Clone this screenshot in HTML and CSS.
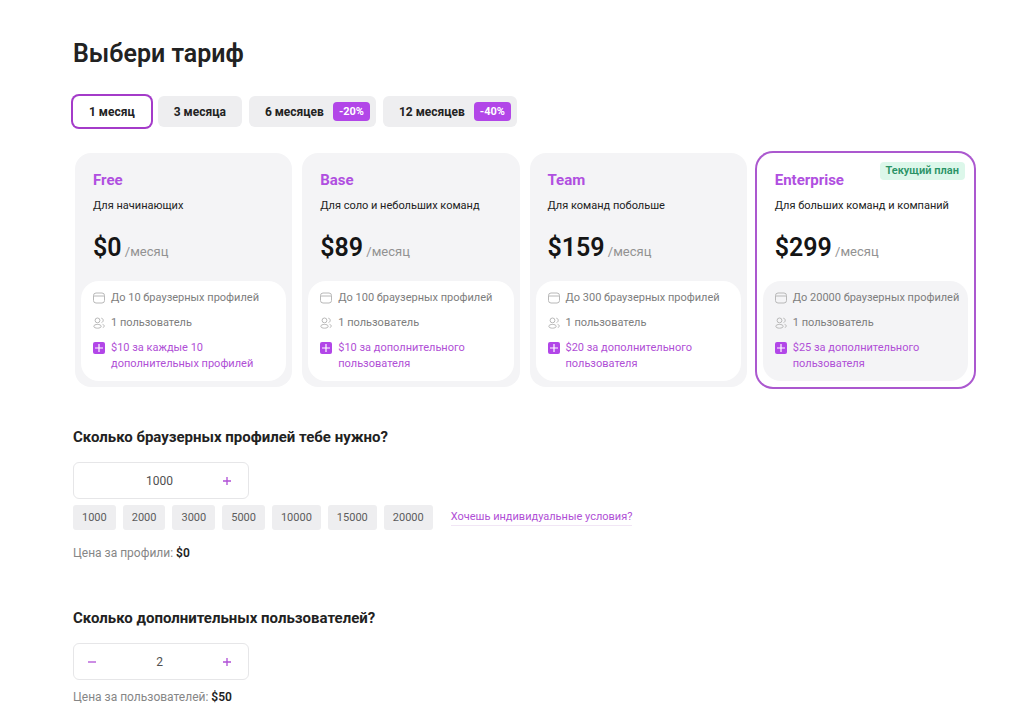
FILE: index.html
```html
<!DOCTYPE html>
<html lang="ru">

<head>
    <meta charset="utf-8">
    <meta name="viewport" content="width=device-width, initial-scale=1">
    <title>Выбери тариф</title>
    <link rel="stylesheet" href="styles.css">
</head>

<body>
    <!-- shared icons -->
    <svg class="sprite" aria-hidden="true">
        <symbol id="icon-window" viewBox="0 0 12 12">
            <rect x="0.5" y="1" width="11" height="10" rx="2.5" fill="none" stroke="currentColor" />
            <path d="M0.5 4H11.5" fill="none" stroke="currentColor" />
        </symbol>
        <symbol id="icon-users" viewBox="0 0 12 12">
            <circle cx="4.5" cy="3.4" r="2.4" fill="none" stroke="currentColor" />
            <path d="M0.8 9.3C0.8 6.8 8.2 6.8 8.2 9.3C8.2 11.8 0.8 11.8 0.8 9.3Z" fill="none" stroke="currentColor" />
            <path d="M8.3 1.2C10.8 1.4 10.8 5 8.6 5.5M9.6 7.4C11.8 8 11.8 10 9.8 10.5" fill="none" stroke="currentColor" />
        </symbol>
        <symbol id="icon-add" viewBox="0 0 12 12">
            <rect width="12" height="12" rx="2" fill="#b246e8" />
            <path d="M6 2V10M2 6H10" fill="none" stroke="#fff" stroke-width="1.2" />
        </symbol>
        <symbol id="icon-plus" viewBox="0 0 10 10">
            <path d="M5 1V9M1 5H9" fill="none" stroke="currentColor" stroke-width="1.3" />
        </symbol>
        <symbol id="icon-minus" viewBox="0 0 10 10">
            <path d="M1 5H9" fill="none" stroke="currentColor" stroke-width="1.3" />
        </symbol>
    </svg>

    <main class="page">
        <h1 class="title">Выбери тариф</h1>

        <div class="periods">
            <button class="period active" type="button">1 месяц</button>
            <button class="period" type="button">3 месяца</button>
            <button class="period with-discount" type="button">6 месяцев <span class="discount">-20%</span></button>
            <button class="period with-discount" type="button">12 месяцев <span class="discount">-40%</span></button>
        </div>

        <div class="plans">
            <section class="plan">
                <h2 class="plan-name">Free</h2>
                <p class="plan-about">Для начинающих</p>
                <p class="plan-price"><strong>$0</strong> /месяц</p>
                <ul class="features">
                    <li><svg class="icon"><use href="#icon-window" /></svg>До 10 браузерных профилей</li>
                    <li><svg class="icon"><use href="#icon-users" /></svg>1 пользователь</li>
                    <li class="extra"><svg class="icon"><use href="#icon-add" /></svg>$10 за каждые 10 дополнительных профилей</li>
                </ul>
            </section>

            <section class="plan">
                <h2 class="plan-name">Base</h2>
                <p class="plan-about">Для соло и небольших команд</p>
                <p class="plan-price"><strong>$89</strong> /месяц</p>
                <ul class="features">
                    <li><svg class="icon"><use href="#icon-window" /></svg>До 100 браузерных профилей</li>
                    <li><svg class="icon"><use href="#icon-users" /></svg>1 пользователь</li>
                    <li class="extra"><svg class="icon"><use href="#icon-add" /></svg>$10 за дополнительного пользователя</li>
                </ul>
            </section>

            <section class="plan">
                <h2 class="plan-name">Team</h2>
                <p class="plan-about">Для команд побольше</p>
                <p class="plan-price"><strong>$159</strong> /месяц</p>
                <ul class="features">
                    <li><svg class="icon"><use href="#icon-window" /></svg>До 300 браузерных профилей</li>
                    <li><svg class="icon"><use href="#icon-users" /></svg>1 пользователь</li>
                    <li class="extra"><svg class="icon"><use href="#icon-add" /></svg>$20 за дополнительного пользователя</li>
                </ul>
            </section>

            <section class="plan current">
                <span class="badge">Текущий план</span>
                <h2 class="plan-name">Enterprise</h2>
                <p class="plan-about">Для больших команд и компаний</p>
                <p class="plan-price"><strong>$299</strong> /месяц</p>
                <ul class="features">
                    <li><svg class="icon"><use href="#icon-window" /></svg>До 20000 браузерных профилей</li>
                    <li><svg class="icon"><use href="#icon-users" /></svg>1 пользователь</li>
                    <li class="extra"><svg class="icon"><use href="#icon-add" /></svg>$25 за дополнительного пользователя</li>
                </ul>
            </section>
        </div>

        <section class="amount">
            <h2 class="amount-title"><label for="profiles">Сколько браузерных профилей тебе нужно?</label></h2>
            <div class="counter">
                <span class="step"></span>
                <input class="counter-value" id="profiles" type="text" inputmode="numeric" value="1000">
                <button class="step" type="button" aria-label="Больше"><svg class="sign"><use href="#icon-plus" /></svg></button>
            </div>
            <div class="presets">
                <button class="preset" type="button">1000</button>
                <button class="preset" type="button">2000</button>
                <button class="preset" type="button">3000</button>
                <button class="preset" type="button">5000</button>
                <button class="preset" type="button">10000</button>
                <button class="preset" type="button">15000</button>
                <button class="preset" type="button">20000</button>
                <a class="custom-link" href="#">Хочешь индивидуальные условия?</a>
            </div>
            <p class="total">Цена за профили: <strong>$0</strong></p>
        </section>

        <section class="amount">
            <h2 class="amount-title"><label for="users">Сколько дополнительных пользователей?</label></h2>
            <div class="counter">
                <button class="step" type="button" aria-label="Меньше"><svg class="sign"><use href="#icon-minus" /></svg></button>
                <input class="counter-value" id="users" type="text" inputmode="numeric" value="2">
                <button class="step" type="button" aria-label="Больше"><svg class="sign"><use href="#icon-plus" /></svg></button>
            </div>
            <p class="total">Цена за пользователей: <strong>$50</strong></p>
        </section>
    </main>
</body>

</html>
```

FILE: styles.css
```css
* {
    box-sizing: border-box;
}

body {
    margin: 0;
    background: #fff;
    color: #222;
    font-family: Roboto, sans-serif;
    font-size: 12px;
    line-height: 16px;
}

h1,
h2,
p,
ul {
    margin: 0;
    padding: 0;
}

button,
input {
    font: inherit;
    color: inherit;
    border: 0;
    padding: 0;
    background: none;
}

button {
    cursor: pointer;
}

.sprite {
    display: none;
}

.page {
    padding: 38px 50px 8px 73px;
}

.title {
    font-size: 25px;
    line-height: 32px;
    font-weight: 600;
}

/* billing period */
.periods {
    display: flex;
    gap: 7px;
    margin-top: 26px;
}

.period {
    display: flex;
    align-items: center;
    gap: 9px;
    height: 31px;
    padding: 0 16px;
    border-radius: 6px;
    background: #eeeef0;
    font-weight: 700;
}

.period.active {
    background: #fff;
    box-shadow: 0 0 0 2px #a43bc9;
}

.period.with-discount {
    padding-right: 6px;
}

.discount {
    padding: 1px 6px;
    border-radius: 4px;
    background: #b246e8;
    color: #fff;
    font-size: 11px;
    line-height: 17px;
}

/* plans */
.plans {
    display: grid;
    grid-template-columns: repeat(4, 1fr);
    gap: 10px;
    margin: 26px 0 0 2px;
}

.plan {
    position: relative;
    padding: 18px 6px 6px;
    border-radius: 16px;
    background: #f4f4f6;
}

.plan-name,
.plan-about,
.plan-price {
    padding: 0 12px;
}

.plan-name {
    color: #b04fe0;
    font-size: 15px;
    line-height: 18px;
    font-weight: 700;
}

.plan-about {
    margin-top: 9px;
    font-size: 11px;
}

.plan-price {
    margin-top: 18px;
    color: #929292;
    font-size: 13px;
    line-height: 32px;
}

.plan-price strong {
    color: #151515;
    font-size: 25px;
    font-weight: 600;
}

.features {
    display: flex;
    flex-direction: column;
    gap: 9px;
    padding: 9px 6px 9px 12px;
    margin-top: 13px;
    border-radius: 18px;
    background: #fff;
    color: #7d7d7d;
    font-size: 11px;
    list-style: none;
}

.features li {
    display: flex;
    gap: 6px;
}

.features .extra {
    color: #b04fd6;
}

.icon {
    flex: none;
    width: 12px;
    height: 12px;
    margin-top: 2px;
    color: #b8b8b8;
}

.plan.current {
    background: #fff;
    box-shadow: 0 0 0 2px #ab58cf;
}

.current .features {
    background: #f4f4f6;
}

.badge {
    position: absolute;
    top: 9px;
    right: 9px;
    padding: 1px 6px;
    border-radius: 4px;
    background: #dcf7ea;
    color: #2a9366;
    font-size: 11px;
    font-weight: 600;
}

/* amounts */
.amount {
    margin-top: 40px;
    padding-bottom: 7px;
}

.amount-title {
    font-size: 15px;
    line-height: 20px;
    font-weight: 700;
}

.counter {
    display: flex;
    width: 176px;
    height: 37px;
    margin-top: 15px;
    padding-right: 3px;
    border: 1px solid #e6e6e8;
    border-radius: 6px;
}

.step {
    display: flex;
    flex: none;
    align-items: center;
    justify-content: center;
    width: 36px;
    color: #b04fd6;
}

.sign {
    width: 10px;
    height: 10px;
}

.counter-value {
    flex: 1;
    min-width: 0;
    color: #505050;
    text-align: center;
}

.presets {
    display: flex;
    flex-wrap: wrap;
    align-items: center;
    gap: 7px;
    margin: 6px 0 15px;
}

.preset {
    height: 25px;
    padding: 0 9px;
    border-radius: 3px;
    background: #eeeef0;
    color: #5c5c5c;
    font-size: 11px;
}

.custom-link {
    margin-left: 11px;
    border-bottom: 1px solid #f1e6f5;
    color: #b04fd6;
    font-size: 11px;
    text-decoration: none;
}

.total {
    margin-top: 9px;
    color: #868686;
}

.total strong {
    color: #222;
    font-weight: 600;
}
```
